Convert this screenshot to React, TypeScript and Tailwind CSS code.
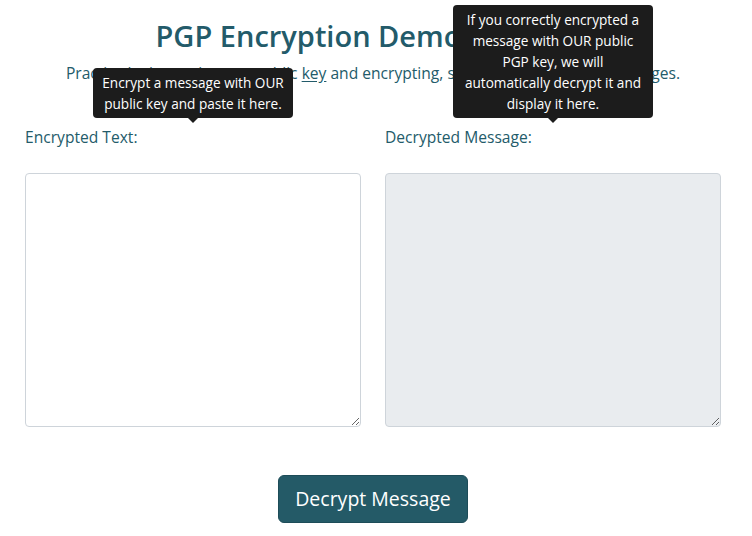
import React from "react";

const font = { fontFamily: '"Open Sans", "Noto Sans", sans-serif' };

function Tooltip({ lines }: { lines: string[] }) {
  return (
    <div className="absolute bottom-full left-1/2 -translate-x-1/2 mb-[2px] flex flex-col items-center">
      <div className="w-[200px] rounded-[4px] bg-[#1c1c1c] px-2 py-1 text-center text-[13.6px] leading-[21px] text-white">
        {lines.map((l) => (
          <div key={l} className="whitespace-nowrap">
            {l}
          </div>
        ))}
      </div>
      <div className="h-0 w-0 border-x-[5px] border-t-[5px] border-x-transparent border-t-[#1c1c1c]" />
    </div>
  );
}

export default function App() {
  return (
    <div className="min-h-[536px] bg-white text-[#235b6a]" style={font}>
      <div className="pl-[25px] pr-[31px] pt-[16px]">
        <h1 className="text-center text-[29px] font-semibold leading-[40px]">
          PGP Encryption Demonstration
        </h1>
        <p className="mt-[5px] text-center text-[15.6px] leading-[24px]">
          Practice by importing our public{" "}
          <span className="underline underline-offset-2">key</span> and encrypting, signing, and
          verifying messages.
        </p>

        <div className="mt-[40px] grid grid-cols-2 gap-x-[24px]">
          <div>
            <div className="relative">
              <label className="block text-[15.6px] leading-[24px]">Encrypted Text:</label>
              <Tooltip lines={["Encrypt a message with OUR", "public key and paste it here."]} />
            </div>
            <textarea className="mt-[24px] block h-[254px] w-full rounded-[4px] border border-[#ced4da] bg-white" />
          </div>
          <div>
            <div className="relative">
              <label className="block text-[15.6px] leading-[24px]">Decrypted Message:</label>
              <Tooltip
                lines={[
                  "If you correctly encrypted a",
                  "message with OUR public",
                  "PGP key, we will",
                  "automatically decrypt it and",
                  "display it here.",
                ]}
              />
            </div>
            <textarea
              disabled
              className="mt-[24px] block h-[254px] w-full rounded-[4px] border border-[#ced4da] bg-[#e9ecef]"
            />
          </div>
        </div>

        <div className="mt-[48px] flex justify-center">
          <button className="h-[48px] w-[190px] rounded-[6px] border border-[#1d4c58] bg-[#245a67] text-[19.5px] text-white">
            Decrypt Message
          </button>
        </div>
      </div>
    </div>
  );
}
